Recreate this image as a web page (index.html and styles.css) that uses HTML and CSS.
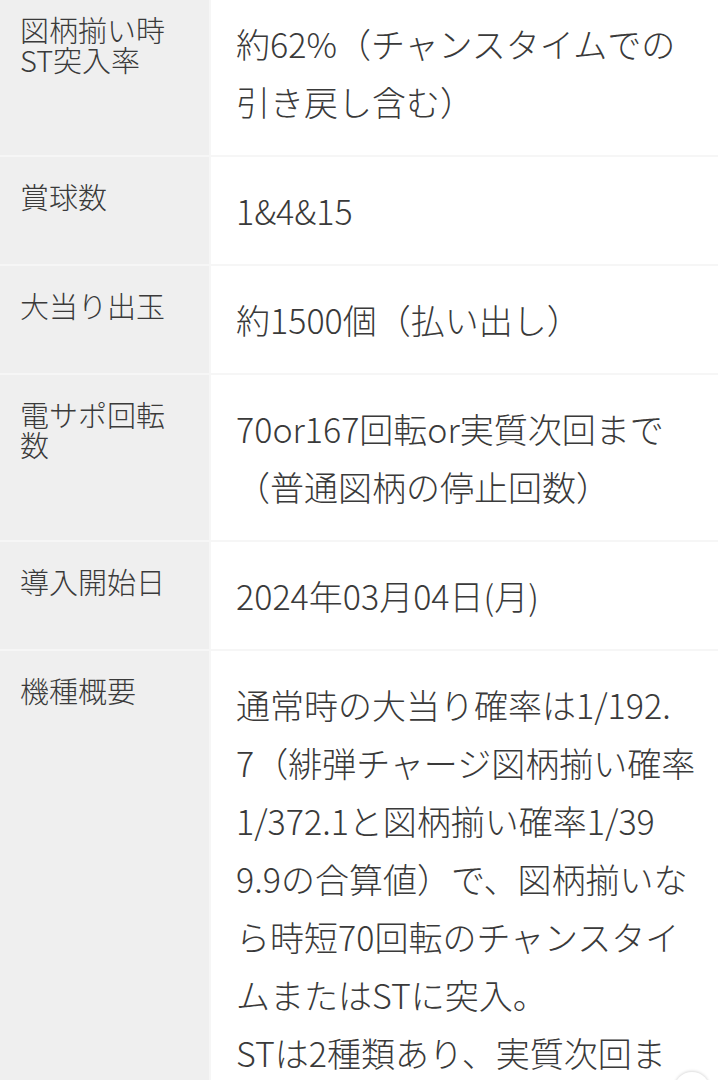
FILE: index.html
```html
<!DOCTYPE html>
<html lang="ja">
<head>
    <meta charset="UTF-8">
    <title>機種スペック</title>
    <link rel="stylesheet" href="styles.css">
</head>
<body>
    <div class="spec">
        <div class="spec-label">図柄揃い時<br>ST突入率</div>
        <div class="spec-value">約62%（チャンスタイムでの<br>引き戻し含む）</div>

        <div class="spec-label">賞球数</div>
        <div class="spec-value">1&amp;4&amp;15</div>

        <div class="spec-label">大当り出玉</div>
        <div class="spec-value">約1500個（払い出し）</div>

        <div class="spec-label">電サポ回転<br>数</div>
        <div class="spec-value">70or167回転or実質次回まで<br>（普通図柄の停止回数）</div>

        <div class="spec-label">導入開始日</div>
        <div class="spec-value">2024年03月04日(月)</div>

        <div class="spec-label">機種概要</div>
        <div class="spec-value">通常時の大当り確率は1/192.<br>7（緋弾チャージ図柄揃い確率<br>1/372.1と図柄揃い確率1/39<br>9.9の合算値）で、図柄揃いな<br>ら時短70回転のチャンスタイ<br>ムまたはSTに突入。<br>STは2種類あり、実質次回ま<br>でのSTと167回転のST。</div>
    </div>
    <div class="to-top"></div>
</body>
</html>
```

FILE: styles.css
```css
* { padding: 0; margin: 0; box-sizing: border-box; }
body {
    background: #fff;
    font-family: "Noto Sans CJK JP", "Noto Sans", sans-serif;
    font-weight: 300;
    color: #3a3a3a;
    overflow: hidden;
}
.spec {
    display: grid;
    grid-template-columns: 209px 1fr;
    gap: 2px;
    background: #f6f6f6;
    margin-top: -10px;
}
.spec-label {
    background: #efefef;
    font-size: 29px;
    line-height: 1.05;
    padding: 24px 10px 24px 20px;
}
.spec-value {
    background: #fff;
    font-size: 34px;
    line-height: 58px;
    padding: 24.5px 8px 24.5px 25px;
    white-space: nowrap;
}
.to-top {
    position: fixed;
    right: 8px;
    top: 1072px;
    width: 36px;
    height: 36px;
    border-radius: 50%;
    background: #fff;
    box-shadow: 0 -1px 3px rgba(0, 0, 0, 0.15);
}
```
